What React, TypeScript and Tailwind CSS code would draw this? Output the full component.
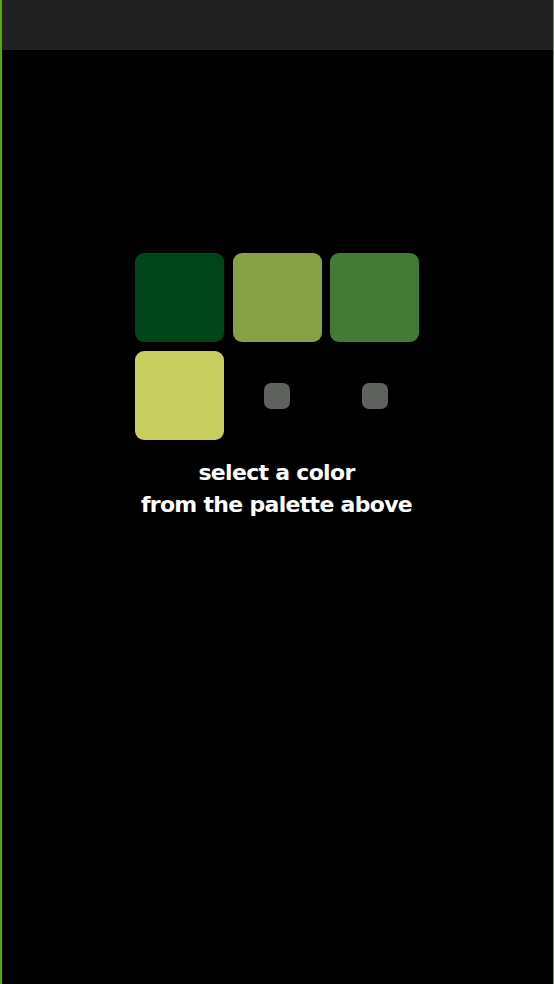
import React from 'react';

const swatches = ['#00461a', '#86a244', '#447a35', '#c8ce60'];

const App: React.FC = () => {
  return (
    <div className="min-h-[984px] w-full bg-black border-l-2 border-r border-[#5aa31a] flex flex-col">
      <div className="h-[50px] bg-[#212121]" />
      <div className="flex flex-col items-center pt-[203px]">
        <div className="grid grid-cols-[89px_89px_89px] gap-x-[8.5px] gap-y-[9px] ml-[-1px]">
          {swatches.map(c => (
            <button key={c} className="w-[89px] h-[89px] rounded-[9px]" style={{ backgroundColor: c }} />
          ))}
          <div className="w-[89px] h-[89px] flex items-center justify-center">
            <div className="w-[26px] h-[26px] rounded-[7px] bg-[#5f615f]" />
          </div>
          <div className="w-[89px] h-[89px] flex items-center justify-center">
            <div className="w-[26px] h-[26px] rounded-[7px] bg-[#5f615f]" />
          </div>
        </div>
        <p className="mt-[17px] text-white text-center text-[22px] leading-[32px] font-bold tracking-[-0.7px] ml-[-2px] font-['DejaVu_Sans',sans-serif]">
          select a color
          <br />
          from the palette above
        </p>
      </div>
    </div>
  );
};

export default App;
